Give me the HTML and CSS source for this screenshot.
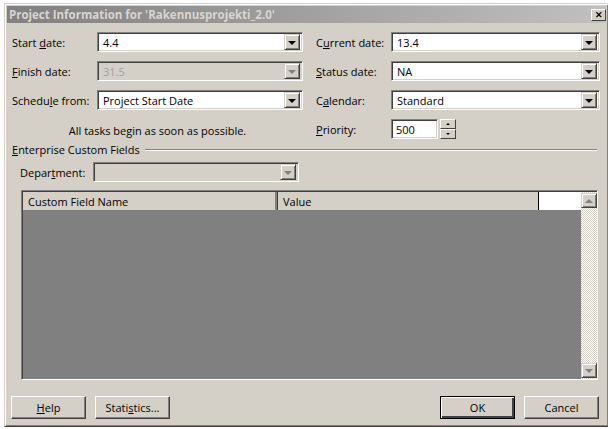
FILE: index.html
```html
<!DOCTYPE html>
<html lang="en">
<head>
  <meta charset="UTF-8" />
  <title>Project Information</title>
  <link rel="stylesheet" href="styles.css">
</head>
<body>
  <div class="dialog">
    <div class="titlebar">
      <span class="title">Project Information for 'Rakennusprojekti_2.0'</span>
      <span class="close">&#x2715;</span>
    </div>

    <!-- Dates and options -->
    <div class="fields">
      <label><span>Start <u>d</u>ate:</span></label>
      <div class="combo"><span class="value">4.4</span><span class="drop"></span></div>
      <label><span>C<u>u</u>rrent date:</span></label>
      <div class="combo wide"><span class="value">13.4</span><span class="drop"></span></div>

      <label><span><u>F</u>inish date:</span></label>
      <div class="combo disabled"><span class="value">31.5</span><span class="drop"></span></div>
      <label><span><u>S</u>tatus date:</span></label>
      <div class="combo wide"><span class="value">NA</span><span class="drop"></span></div>

      <label><span>Schedu<u>l</u>e from:</span></label>
      <div class="combo"><span class="value">Project Start Date</span><span class="drop"></span></div>
      <label><span>C<u>a</u>lendar:</span></label>
      <div class="combo wide"><span class="value">Standard</span><span class="drop"></span></div>

      <div class="hint">All tasks begin as soon as possible.</div>
      <label><span><u>P</u>riority:</span></label>
      <div class="priority">
        <div class="spin-input">500</div>
        <div class="spin">
          <span class="spin-btn up"></span>
          <span class="spin-btn down"></span>
        </div>
      </div>
    </div>

    <!-- Enterprise fields -->
    <div class="group-title"><span><u>E</u>nterprise Custom Fields</span></div>
    <div class="dept-row">
      <label>Depar<u>t</u>ment:</label>
      <div class="combo disabled"><span class="value"></span><span class="drop"></span></div>
    </div>

    <div class="table">
      <div class="table-main">
        <div class="table-head">
          <div class="th name">Custom Field Name</div>
          <div class="th val">Value</div>
          <div class="th edit"></div>
        </div>
        <div class="table-body"></div>
      </div>
      <div class="scrollbar">
        <span class="sb-btn up"></span>
        <span class="sb-btn down"></span>
      </div>
    </div>

    <div class="buttons">
      <button><u>H</u>elp</button>
      <button>Stati<u>s</u>tics...</button>
      <span class="spacer"></span>
      <button class="default">OK</button>
      <button>Cancel</button>
    </div>
  </div>
</body>
</html>
```

FILE: styles.css
```css
body {
  margin: 0;
  background-color: #ffffff;
  font-family: "Open Sans", "Noto Sans", sans-serif;
  font-size: 11px;
  color: #000;
}
u {
  text-decoration: underline;
  text-underline-offset: 1px;
}
.dialog {
  margin: 3px 0 0 4px;
  width: 604px;
  height: 424px;
  box-sizing: border-box;
  background-color: #d4d0c8;
  border-top: 1px solid #d4d0c8;
  border-left: 1px solid #d4d0c8;
  border-bottom: 1px solid #404040;
  box-shadow: inset 1px 1px 0 #fff, inset -1px -1px 0 #808080;
  padding: 2px;
  display: flex;
  flex-direction: column;
}
.titlebar {
  height: 17px;
  background: linear-gradient(to right, #808080, #c0c0c0);
  display: flex;
  align-items: center;
  justify-content: space-between;
  padding: 0 0 0 2px;
}
.title {
  color: #d8d5ce;
  font-weight: bold;
  font-size: 11.5px;
  white-space: nowrap;
}
.close {
  width: 15px;
  height: 12px;
  box-sizing: border-box;
  background: #d4d0c8;
  border-top: 1px solid #fff;
  border-left: 1px solid #fff;
  border-right: 1px solid #404040;
  border-bottom: 1px solid #404040;
  font-size: 9px;
  font-weight: bold;
  line-height: 10px;
  text-align: center;
  margin-top: 1px;
}

/* form rows */
.fields {
  display: grid;
  grid-template-columns: 85px 219px 75px 209px;
  grid-auto-rows: 20px;
  row-gap: 9px;
  margin: 9px 0 0 5px;
}
.fields label {
  display: flex;
  align-items: center;
  white-space: nowrap;
}
.combo {
  width: 206px;
  height: 20px;
  box-sizing: border-box;
  background: #fff;
  border-top: 1px solid #808080;
  border-left: 1px solid #808080;
  border-right: 1px solid #fff;
  border-bottom: 1px solid #fff;
  box-shadow: inset 1px 1px 0 #404040, inset -1px -1px 0 #d4d0c8;
  display: flex;
  align-items: center;
  padding: 2px;
}
.combo.wide {
  width: 209px;
}
.combo .value {
  flex: 1;
  padding-left: 3px;
  white-space: nowrap;
}
.combo.disabled {
  background: #d4d0c8;
  color: #a0a0a0;
}
.drop {
  width: 16px;
  height: 16px;
  box-sizing: border-box;
  background: #d4d0c8;
  border-top: 1px solid #d4d0c8;
  border-left: 1px solid #d4d0c8;
  border-right: 1px solid #404040;
  border-bottom: 1px solid #404040;
  box-shadow: inset 1px 1px 0 #fff, inset -1px -1px 0 #808080;
  display: flex;
  align-items: center;
  justify-content: center;
}
.drop::after {
  content: "";
  border-left: 4px solid transparent;
  border-right: 4px solid transparent;
  border-top: 4px solid #000;
  margin-top: 1px;
}
.combo.disabled .drop::after {
  border-top-color: #808080;
}
.hint {
  grid-column: 1 / 3;
  width: 291px;
  text-align: center;
  align-self: center;
  margin-top: 3px;
}
.priority {
  display: flex;
  gap: 2px;
}
.spin-input {
  width: 47px;
  height: 20px;
  box-sizing: border-box;
  background: #fff;
  border-top: 1px solid #808080;
  border-left: 1px solid #808080;
  border-right: 1px solid #fff;
  border-bottom: 1px solid #fff;
  box-shadow: inset 1px 1px 0 #404040, inset -1px -1px 0 #d4d0c8;
  padding: 2px 4px;
  line-height: 16px;
}
.spin {
  display: flex;
  flex-direction: column;
  width: 16px;
  height: 20px;
}
.spin-btn {
  flex: 1;
  box-sizing: border-box;
  background: #d4d0c8;
  border-top: 1px solid #fff;
  border-left: 1px solid #fff;
  border-right: 1px solid #404040;
  border-bottom: 1px solid #404040;
  display: flex;
  align-items: center;
  justify-content: center;
}
.spin-btn.up::after {
  content: "";
  border-left: 2px solid transparent;
  border-right: 2px solid transparent;
  border-bottom: 2px solid #000;
}
.spin-btn.down::after {
  content: "";
  border-left: 2px solid transparent;
  border-right: 2px solid transparent;
  border-top: 2px solid #000;
}

/* enterprise group */
.group-title {
  display: flex;
  align-items: center;
  margin: 3px 9px 0 5px;
  height: 15px;
}
.group-title span {
  white-space: nowrap;
  margin-right: 5px;
}
.group-title::after {
  content: "";
  flex: 1;
  border-top: 1px solid #808080;
  border-bottom: 1px solid #fff;
}
.dept-row {
  display: flex;
  align-items: center;
  margin: 5px 0 0 13px;
}
.dept-row label {
  width: 73px;
}

/* custom fields table */
.table {
  margin: 8px 8px 0 14px;
  height: 190px;
  box-sizing: border-box;
  border-top: 1px solid #808080;
  border-left: 1px solid #808080;
  border-right: 1px solid #fff;
  border-bottom: 1px solid #fff;
  box-shadow: inset 1px 1px 0 #404040;
  padding: 1px 0 0 1px;
  display: flex;
}
.table-main {
  flex: 1;
  display: flex;
  flex-direction: column;
}
.table-head {
  display: flex;
  height: 18px;
  background: #d4d0c8;
}
.th {
  display: flex;
  align-items: center;
  padding-left: 5px;
  box-sizing: border-box;
  border-right: 1px solid #404040;
  box-shadow: inset -2px 0 0 #808080;
}
.th.name {
  width: 255px;
}
.th.val {
  width: 261px;
  border-right: 1px solid #000;
  box-shadow: none;
}
.th.edit {
  flex: 1;
  background: #fff;
  border-right: none;
  box-shadow: none;
}
.table-body {
  flex: 1;
  background: #808080;
}
.scrollbar {
  width: 16px;
  display: flex;
  flex-direction: column;
  justify-content: space-between;
  background: repeating-conic-gradient(#d4d0c8 0 25%, #ffffff 0 50%) 0 0 / 2px 2px;
  padding: 1px 0 1px 0;
}
.sb-btn {
  width: 16px;
  height: 15px;
  box-sizing: border-box;
  background: #d4d0c8;
  border-top: 1px solid #d4d0c8;
  border-left: 1px solid #d4d0c8;
  border-right: 1px solid #404040;
  border-bottom: 1px solid #404040;
  box-shadow: inset 1px 1px 0 #fff, inset -1px -1px 0 #808080;
  display: flex;
  align-items: center;
  justify-content: center;
}
.sb-btn.up::after {
  content: "";
  border-left: 4px solid transparent;
  border-right: 4px solid transparent;
  border-bottom: 4px solid #808080;
}
.sb-btn.down::after {
  content: "";
  border-left: 4px solid transparent;
  border-right: 4px solid transparent;
  border-top: 4px solid #808080;
}

/* buttons */
.buttons {
  display: flex;
  gap: 9px;
  margin: 16px 7px 0 4px;
}
.spacer {
  flex: 1;
}
button {
  width: 75px;
  height: 23px;
  box-sizing: border-box;
  font-family: "Open Sans", "Noto Sans", sans-serif;
  font-size: 11px;
  color: #000;
  background: #d4d0c8;
  border-top: 1px solid #fff;
  border-left: 1px solid #fff;
  border-right: 1px solid #404040;
  border-bottom: 1px solid #404040;
  box-shadow: inset -1px -1px 0 #808080;
  padding: 0;
}
button.default {
  border: 1px solid #000;
  box-shadow: inset 1px 1px 0 #fff, inset -2px -2px 0 #404040, inset -1px -1px 0 #808080;
}
```
